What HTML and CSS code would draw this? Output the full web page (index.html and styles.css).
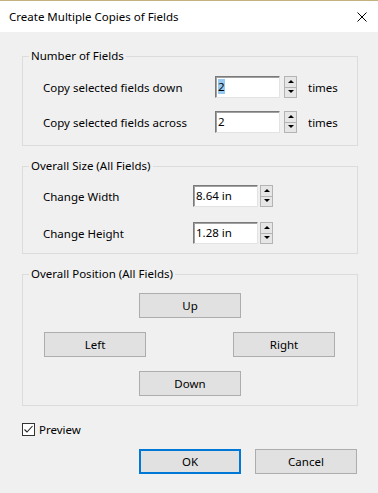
FILE: index.html
```html
<!DOCTYPE html>
<html lang="en">

<head>
  <meta charset="UTF-8">
  <title>Create Multiple Copies of Fields</title>
  <link rel="stylesheet" href="styles.css">
</head>

<body>
  <div class="window">
    <div class="titlebar">
      <span class="title">Create Multiple Copies of Fields</span>
      <svg class="close" width="10" height="10" viewBox="0 0 10 10">
        <path d="M0.5 0.5 L9.5 9.5 M9.5 0.5 L0.5 9.5" stroke="#000" stroke-width="1" fill="none"/>
      </svg>
    </div>

    <div class="content">
      <fieldset class="group group-count">
        <legend>Number of Fields</legend>
        <div class="row">
          <label class="label">Copy selected fields down</label>
          <div class="box"><span class="sel">2</span></div>
          <div class="spin"><span class="up"></span><span class="down"></span></div>
          <span class="unit">times</span>
        </div>
        <div class="row">
          <label class="label">Copy selected fields across</label>
          <div class="box">2</div>
          <div class="spin"><span class="up"></span><span class="down"></span></div>
          <span class="unit">times</span>
        </div>
      </fieldset>

      <fieldset class="group group-size">
        <legend>Overall Size (All Fields)</legend>
        <div class="row">
          <label class="label">Change Width</label>
          <div class="box">8.64 in</div>
          <div class="spin"><span class="up"></span><span class="down"></span></div>
        </div>
        <div class="row">
          <label class="label">Change Height</label>
          <div class="box">1.28 in</div>
          <div class="spin"><span class="up"></span><span class="down"></span></div>
        </div>
      </fieldset>

      <fieldset class="group group-pos">
        <legend>Overall Position (All Fields)</legend>
        <div class="pos-row center"><button class="btn">Up</button></div>
        <div class="pos-row sides"><button class="btn">Left</button><button class="btn">Right</button></div>
        <div class="pos-row center"><button class="btn">Down</button></div>
      </fieldset>

      <div class="preview">
        <span class="check">
          <svg width="11" height="11" viewBox="0 0 11 11">
            <path d="M1.5 5.5 L4 8 L9.5 2" stroke="#222" stroke-width="1.1" fill="none"/>
          </svg>
        </span>
        <span>Preview</span>
      </div>

      <div class="actions">
        <button class="btn default">OK</button>
        <button class="btn">Cancel</button>
      </div>
    </div>
  </div>
</body>

</html>
```

FILE: styles.css
```css
body {
  margin: 0;
  background-color: #f0f0f0;
  font-family: 'Noto Sans', 'Open Sans', sans-serif;
  font-size: 11.5px;
  color: #000;
}

.window {
  width: 378px;
  height: 493px;
  background-color: #f0f0f0;
  overflow: hidden;
}

.titlebar {
  height: 31px;
  background-color: #fff;
  border-top: 1px solid #c4b27e;
  display: flex;
  align-items: center;
  justify-content: space-between;
  padding: 0 11px 0 9px;
}

.title {
  font-size: 11.5px;
}

.content {
  padding: 0 20px 0 22px;
}

.group {
  margin: 0;
  padding: 0 0 0 6px;
  border: 1px solid #dcdcdc;
}

.group legend {
  padding: 0 2px;
  line-height: 16px;
}

.group-count {
  margin-top: 16px;
  padding-top: 12px;
  padding-bottom: 12px;
}

.group-size {
  margin-top: 12px;
  padding-top: 11px;
  padding-bottom: 9px;
}

.group-pos {
  margin-top: 12px;
  padding-top: 11px;
  padding-bottom: 9px;
}

.row {
  display: flex;
  align-items: center;
  padding-left: 14px;
}

.row + .row {
  margin-top: 13px;
}

.group-size .row + .row {
  margin-top: 15px;
}

.label {
  width: 172px;
}

.group-size .label {
  width: 150px;
}

.box {
  width: 61px;
  height: 20px;
  background-color: #fff;
  border-top: 1px solid #7a7a7a;
  border-left: 1px solid #7a7a7a;
  border-right: 1px solid #e3e3e3;
  border-bottom: 1px solid #e3e3e3;
  box-shadow: inset 1px 1px 0 #a0a0a0;
  padding-left: 2px;
  line-height: 20px;
  box-sizing: content-box;
}

.sel {
  background-color: #99c9ef;
}

.spin {
  display: flex;
  flex-direction: column;
  margin-left: 4px;
  width: 13px;
  height: 22px;
}

.group-size .spin {
  margin-left: 2px;
}

.spin span {
  flex: 1;
  background-color: #e6e6e6;
  border: 1px solid #b4b4b4;
  position: relative;
}

.spin span + span {
  border-top: none;
}

.spin .up::after,
.spin .down::after {
  content: "";
  position: absolute;
  left: 3px;
  top: 3px;
  border-left: 3px solid transparent;
  border-right: 3px solid transparent;
}

.spin .up::after {
  border-bottom: 3px solid #000;
}

.spin .down::after {
  top: 2px;
  border-top: 3px solid #000;
}

.unit {
  margin-left: 11px;
}

.pos-row {
  display: flex;
}

.pos-row.center {
  justify-content: center;
  padding-right: 6px;
}

.pos-row.sides {
  justify-content: space-between;
  padding: 0 22px 0 15px;
  margin: 14px 0;
}

.btn {
  width: 102px;
  height: 25px;
  background-color: #e1e1e1;
  border: 1px solid #adadad;
  font-family: inherit;
  font-size: 11.5px;
  color: #000;
  padding: 0;
  margin: 0;
}

.btn.default {
  border: 2px solid #0078d7;
}

.preview {
  display: flex;
  align-items: center;
  gap: 4px;
  margin-top: 16px;
}

.check {
  width: 11px;
  height: 11px;
  border: 1px solid #333;
  background-color: #fff;
  display: flex;
}

.actions {
  display: flex;
  justify-content: flex-end;
  gap: 14px;
  margin-top: 12px;
  padding-right: 1px;
}
```
